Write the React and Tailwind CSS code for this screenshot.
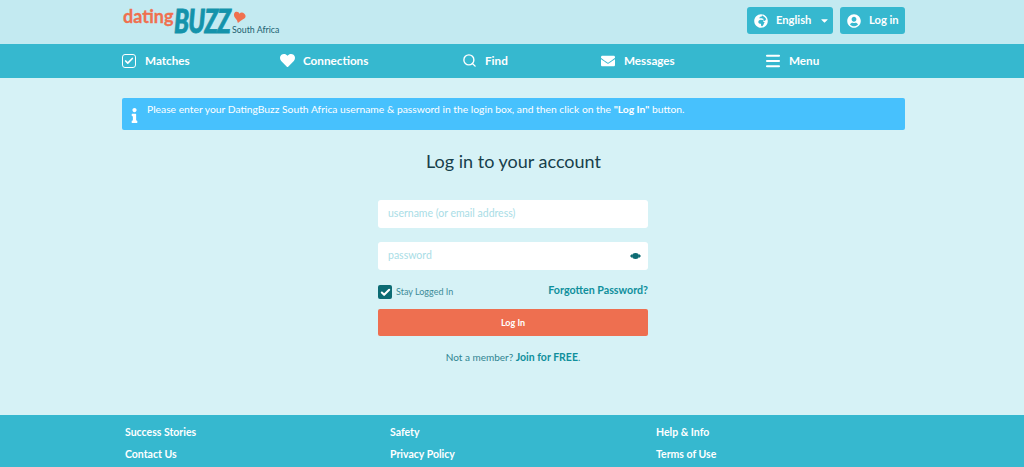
import React from "react";
import { Check, Search, Menu } from "lucide-react";
import { FaHeart, FaEnvelope, FaUserCircle, FaGlobeAfrica, FaInfo, FaCaretDown } from "react-icons/fa";

const navItems = [
  { label: "Matches", icon: <span className="w-[14px] h-[14px] rounded-[3px] border-[1.5px] border-white flex items-center justify-center"><Check size={10} strokeWidth={4} /></span> },
  { label: "Connections", icon: <FaHeart size={15} /> },
  { label: "Find", icon: <Search size={15} strokeWidth={2.2} /> },
  { label: "Messages", icon: <FaEnvelope size={14} /> },
  { label: "Menu", icon: <Menu size={18} strokeWidth={2.8} className="-ml-[2px]" /> },
];

const footerLinks = ["Success Stories", "Safety", "Help & Info", "Contact Us", "Privacy Policy", "Terms of Use"];

// eye with the little lashes either side, as in the password box
const EyeIcon = () => (
  <svg width="11" height="8" viewBox="0 0 22 14" fill="#0c6b73">
    <path d="M0 7l4-4v8zM22 7l-4-4v8z" />
    <ellipse cx="11" cy="7" rx="7" ry="6" />
  </svg>
);

const Logo = () => (
  <div className="relative w-[160px] h-[36px]">
    <span className="absolute left-[1px] top-[4px] text-[#f0704f] text-[18px] font-bold leading-[24px] [-webkit-text-stroke:0.3px_#f0704f]">dating</span>
    <span className="absolute left-[52px] top-[7px] origin-left scale-x-[0.76] text-[#1493ab] text-[32px] font-black italic leading-[28px] tracking-[-1px] [-webkit-text-stroke:0.8px_#1493ab]">BUZZ</span>
    <svg className="absolute left-[111px] top-[11px]" width="13" height="13" viewBox="0 0 24 22" fill="#f0704f">
      <path d="M4 1c4-2 7 0 8 3 2-3 6-3 9 0s3 6 0 9c-3 2-7 4-12 8-1-4-2-6-5-9C1 9 1 3 4 1z" />
    </svg>
    <span className="absolute left-[110px] top-[23px] text-[#1c5f70] text-[8.8px] leading-[14px] whitespace-nowrap">South Africa</span>
  </div>
);

export default function App() {
  return (
    <div className="h-[467px] overflow-hidden bg-[#d6f2f6] text-white font-['Lato',sans-serif]">
      {/* top bar */}
      <div className="h-[44px] bg-[#c3eaf1]">
        <div className="w-[783px] ml-[122px] flex justify-between">
          <Logo />
          <div className="flex gap-[7px] pt-[7px]">
            <div className="h-[27px] w-[86px] bg-[#36b8cf] rounded-[3px] flex items-center pl-[7px] text-[11.2px] font-bold">
              <FaGlobeAfrica size={14} />
              <span className="ml-[8px]">English</span>
              <FaCaretDown size={11} className="ml-[8px]" />
            </div>
            <div className="h-[27px] w-[65px] bg-[#36b8cf] rounded-[3px] flex items-center pl-[7px] text-[11.2px] font-bold">
              <FaUserCircle size={14} />
              <span className="ml-[8px]">Log in</span>
            </div>
          </div>
        </div>
      </div>

      {/* nav */}
      <div className="h-[34px] bg-[#36b8cf]">
        <div className="w-[783px] ml-[122px] h-full grid grid-cols-[158px_182px_139px_165px_1fr] items-center">
          {navItems.map((item) => (
            <div key={item.label} className="flex items-center">
              <span className="w-[22px] flex">{item.icon}</span>
              <span className="ml-[1px] -mt-[1px] text-[11.7px] font-bold">{item.label}</span>
            </div>
          ))}
        </div>
      </div>

      {/* main */}
      <div className="h-[337px] pt-[20px]">
        <div className="w-[783px] h-[32px] ml-[122px] bg-[#47c1fd] rounded-[2px] flex items-center">
          <FaInfo size={15} className="ml-[5px] mt-[3px]" />
          <p className="ml-[5px] -mt-[8px] text-[10.3px]">
            Please enter your DatingBuzz South Africa username &amp; password in the login box, and then click on the <b>"Log In"</b> button.
          </p>
        </div>

        <h1 className="mt-[18px] ml-[122px] w-[783px] text-center text-[18px] leading-[27px] text-[#17404b]">Log in to your account</h1>

        <div className="w-[270px] ml-[378px] mt-[25px]">
          <div className="h-[28px] bg-white rounded-[3px] pl-[10px] flex items-center text-[10.5px] text-[#a9dde6]">username (or email address)</div>
          <div className="h-[28px] mt-[14px] bg-white rounded-[3px] pl-[10px] pr-[7px] flex items-center justify-between text-[10.5px] text-[#a9dde6]">
            <span>password</span>
            <EyeIcon />
          </div>
          <div className="mt-[12px] h-[24px] flex justify-between">
            <div className="flex items-center mt-[3px] h-[14px]">
              <span className="w-[14px] h-[14px] rounded-[2px] bg-[#0c6b73] flex items-center justify-center">
                <Check size={11} strokeWidth={4.5} />
              </span>
              <span className="ml-[4px] text-[9px] text-[#3d8c99]">Stay Logged In</span>
            </div>
            <span className="text-[10.7px] font-bold text-[#0f8f9c]">Forgotten Password?</span>
          </div>
          <div className="h-[27px] mt-[3px] bg-[#ee6f50] rounded-[2px] flex items-center justify-center text-[9px] font-bold">Log In</div>
          <p className="mt-[14px] text-center text-[10px] text-[#2f8491]">
            Not a member? <b className="text-[#0f8f9c] text-[10.5px]">Join for FREE</b>.
          </p>
        </div>
      </div>

      {/* footer */}
      <div className="h-[52px] bg-[#36b8cf]">
        <div className="w-[783px] ml-[122px] pl-[3px] pt-[9px] grid grid-cols-[265px_266px_1fr] gap-y-[5px] text-[10.5px] font-bold leading-[17px]">
          {footerLinks.map((l) => (
            <span key={l}>{l}</span>
          ))}
        </div>
      </div>
    </div>
  );
}
